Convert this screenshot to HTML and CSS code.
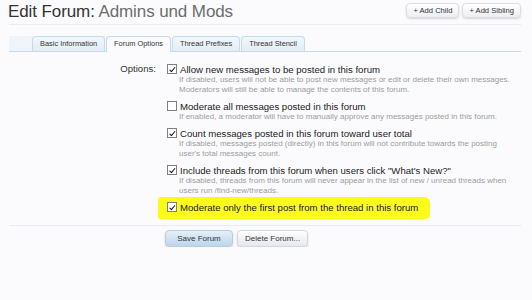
FILE: index.html
```html
<!DOCTYPE html>
<html>
<head>
<meta charset="utf-8">
<link rel="stylesheet" href="styles.css">
</head>
<body>
<div class="page">
  <div class="header">
    <h1 class="title">Edit Forum: <span class="title-sub">Admins und Mods</span></h1>
    <div class="top-actions">
      <span class="small-btn">+ Add Child</span>
      <span class="small-btn">+ Add Sibling</span>
    </div>
  </div>
  <div class="tabstrip">
    <span class="tab">Basic Information</span>
    <span class="tab active">Forum Options</span>
    <span class="tab">Thread Prefixes</span>
    <span class="tab">Thread Stencil</span>
  </div>
  <div class="form">
    <div class="label">Options:</div>
    <div class="choices">
      <div class="choice">
        <div class="choice-line"><span class="cb checked"></span><span class="choice-text">Allow new messages to be posted in this forum</span></div>
        <div class="hint">If disabled, users will not be able to post new messages or edit or delete their own messages.<br>Moderators will still be able to manage the contents of this forum.</div>
      </div>
      <div class="choice">
        <div class="choice-line"><span class="cb"></span><span class="choice-text">Moderate all messages posted in this forum</span></div>
        <div class="hint">If enabled, a moderator will have to manually approve any messages posted in this forum.</div>
      </div>
      <div class="choice">
        <div class="choice-line"><span class="cb checked"></span><span class="choice-text">Count messages posted in this forum toward user total</span></div>
        <div class="hint">If disabled, messages posted (directly) in this forum will not contribute towards the posting<br>user's total messages count.</div>
      </div>
      <div class="choice last-plain">
        <div class="choice-line"><span class="cb checked"></span><span class="choice-text">Include threads from this forum when users click "What's New?"</span></div>
        <div class="hint">If disabled, threads from this forum will never appear in the list of new / unread threads when<br>users run /find-new/threads.</div>
      </div>
      <div class="choice highlight">
        <div class="choice-line"><span class="cb checked"></span><span class="choice-text">Moderate only the first post from the thread in this forum</span></div>
      </div>
    </div>
  </div>
  <div class="submit-row">
    <span class="btn primary">Save Forum</span>
    <span class="btn">Delete Forum...</span>
  </div>
</div>
</body>
</html>
```

FILE: styles.css
```css
html, body {
  margin: 0;
  padding: 0;
  background: #fbfbfd;
}
body {
  font-family: "Liberation Sans", Arial, sans-serif;
  color: #222;
}
.page {
  width: 512px;
  margin-left: 9px;
}
.header {
  display: flex;
  justify-content: space-between;
  align-items: flex-start;
  height: 24px;
  border-bottom: 1px solid #e8ecf0;
}
.title {
  margin: 1px 0 0 -1px;
  font-size: 17px;
  font-weight: normal;
  color: #333;
  line-height: 22px;
  letter-spacing: -0.1px;
}
.title-sub {
  color: #6d6d6d;
}
.top-actions {
  display: flex;
  gap: 3px;
  margin-top: 3px;
}
.small-btn {
  font-size: 7.6px;
  line-height: 13px;
  height: 13px;
  padding: 0 6px;
  color: #333;
  border: 1px solid #dcdde2;
  border-radius: 4px;
  background: linear-gradient(#ffffff, #eceef2);
  box-shadow: 0 1px 2px rgba(0,0,0,0.15);
}
.tabstrip {
  margin-top: 11px;
  display: flex;
  padding-left: 23px;
  height: 15px;
  border-bottom: 1px solid #c6dbe9;
  background: linear-gradient(to right, #eef4fa 0%, #fbfbfd 60%);
}
.tab {
  font-size: 7.4px;
  line-height: 14px;
  padding: 0 7px;
  color: #333;
  border: 1px solid #c6dbe9;
  border-bottom: none;
  border-radius: 4px 4px 0 0;
  background: linear-gradient(#f2f7fb, #e3edf5);
  margin-right: 1px;
}
.tab.active {
  background: #fbfbfd;
  height: 15px;
  margin-bottom: -1px;
}
.form {
  display: flex;
  margin-top: 11px;
}
.label {
  width: 147px;
  text-align: right;
  font-size: 9.6px;
  line-height: 12px;
  color: #333;
}
.choices {
  margin-left: 11px;
}
.choice {
  margin-bottom: 5px;
}
.choice.last-plain {
  margin-bottom: 1px;
}
.choice-line {
  display: flex;
  align-items: center;
  height: 12px;
}
.cb {
  width: 8px;
  height: 8px;
  border: 1px solid #7f7f7f;
  background: #fff;
  margin-right: 3px;
  position: relative;
  box-sizing: content-box;
  flex: none;
}
.cb.checked::after {
  content: "";
  position: absolute;
  left: 2.5px;
  top: 0.5px;
  width: 2px;
  height: 4.5px;
  border: solid #111;
  border-width: 0 1.6px 1.6px 0;
  transform: rotate(40deg);
}
.choice-text {
  font-size: 9.6px;
  color: #222;
  white-space: nowrap;
}
.hint {
  margin-left: 12px;
  font-size: 8px;
  line-height: 10px;
  color: #9c9c9c;
  white-space: nowrap;
}
.highlight {
  background: #fbfb1a;
  margin-left: -9px;
  padding: 4px 8px 6px 9px;
  width: 255px;
  border-radius: 3px 6px 4px 2px;
}
.submit-row {
  border-top: 1px solid #e6ecf1;
  margin-top: 1px;
  padding-top: 4px;
  padding-left: 156px;
  display: flex;
  gap: 4px;
}
.btn {
  font-size: 8px;
  line-height: 15px;
  height: 15px;
  padding: 0 7px;
  color: #333;
  border: 1px solid #d4d6dc;
  border-radius: 4px;
  background: linear-gradient(#ffffff, #e6e8ee);
  box-shadow: 0 1px 2px rgba(0,0,0,0.18);
}
.btn.primary {
  width: 52px;
  text-align: center;
  border-color: #b7cde0;
  background: linear-gradient(#e4eff8, #bcd6ec);
}
```
